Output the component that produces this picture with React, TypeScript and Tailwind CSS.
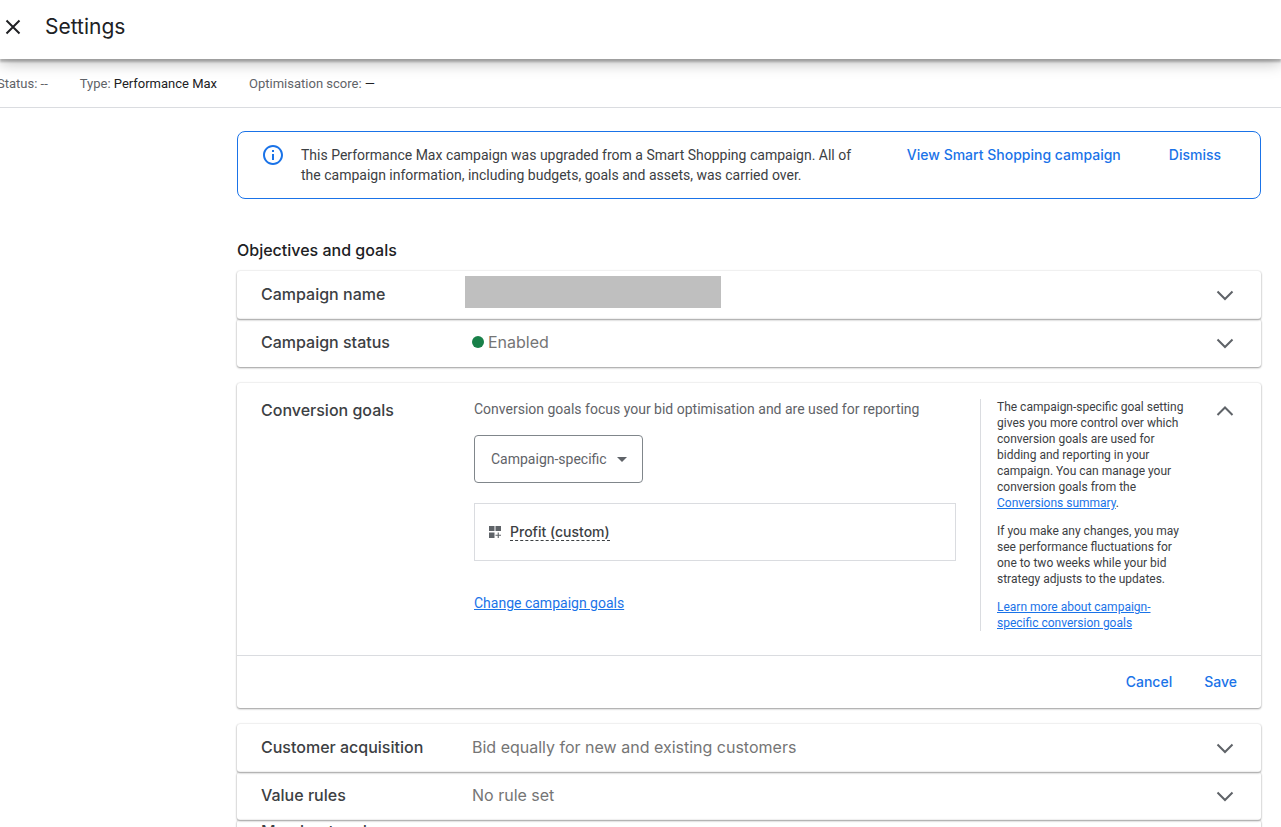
import type { ReactNode } from 'react';

const FONT_DISPLAY = "font-['Inter',sans-serif]";

function Chevron({ up = false }: { up?: boolean }) {
  return (
    <svg viewBox="0 0 24 24" className="h-6 w-6" fill="none" stroke="#5f6368" strokeWidth="2">
      <path d={up ? 'M4.500 16 12 8.500l7.500 7.500' : 'M4.500 8.500 12 16l7.500-7.500'} />
    </svg>
  );
}

function InfoIcon() {
  return (
    <svg viewBox="0 0 24 24" className="h-6 w-6 shrink-0" fill="#1a73e8">
      <path d="M11 7h2v2h-2zm0 4h2v6h-2zm1-9C6.480 2 2 6.480 2 12s4.480 10 10 10 10-4.480 10-10S17.520 2 12 2zm0 18c-4.410 0-8-3.590-8-8s3.590-8 8-8 8 3.590 8 8-3.590 8-8 8z" />
    </svg>
  );
}

function CustomGoalIcon() {
  return (
    <svg viewBox="0 0 14 14" className="h-3.5 w-3.5 shrink-0" fill="#5f6368">
      <path d="M1 1h5.500v5H1zM7.500 1H13v5H7.500zM1 7.500h5.500V13H1zM9.700 7.500h1.100v2.200H13v1.100h-2.200V13H9.700v-2.200H7.500V9.700h2.200z" />
    </svg>
  );
}

function SettingRow({ title, children }: { title: string; children?: ReactNode }) {
  return (
    <section className="flex h-12 items-center rounded-[3px] px-6 shadow-[0_1px_2px_rgba(0,0,0,0.36),0_0_2px_rgba(0,0,0,0.16)]">
      <h3 className={`${FONT_DISPLAY} w-[204px] shrink-0 pr-10 pb-0.5 text-base leading-6 font-medium text-[#3c4043]`}>
        {title}
      </h3>
      <div className={`${FONT_DISPLAY} flex flex-1 items-center pb-0.5 text-base text-[#757575]`}>{children}</div>
      <button type="button" aria-label={`Expand ${title}`}>
        <Chevron />
      </button>
    </section>
  );
}

export default function App() {
  return (
    <div className="flex h-screen flex-col overflow-hidden bg-white font-['Roboto',sans-serif] text-[#3c4043]">
      <header className="relative flex h-[59px] shrink-0 items-center bg-white pb-1.5 shadow-[0_3px_2px_rgba(0,0,0,0.24),0_4px_14px_rgba(0,0,0,0.26)]">
        <button type="button" aria-label="Close" className="ml-px">
          <svg viewBox="0 0 24 24" className="h-6 w-6" fill="none" stroke="#202124" strokeWidth="2">
            <path d="M5.500 5.500l13 13m0-13l-13 13" />
          </svg>
        </button>
        <h1 className={`${FONT_DISPLAY} ml-5 text-[21px] leading-7 text-[#202124]`}>Settings</h1>
      </header>

      <div className="flex h-[49px] shrink-0 items-center gap-8 border-b border-[#dadce0] pt-0.5 text-[13px] text-[#5f6368]">
        <div className="-ml-[3px]">Status: --</div>
        <div>
          Type: <span className="text-[#202124]">Performance Max</span>
        </div>
        <div>
          Optimisation score: <span className="text-[#202124]">—</span>
        </div>
      </div>

      <main className="pl-[237px] pr-5 pt-[23px]">
        <div className="flex h-[68px] items-start rounded-lg border border-[#1a73e8] pl-[23px] pr-[39px] pt-[11px]">
          <InfoIcon />
          <p className="ml-4 w-[580px] shrink-0 pt-0.5 text-sm leading-5">
            This Performance Max campaign was upgraded from a Smart Shopping campaign. All of
            <br />
            the campaign information, including budgets, goals and assets, was carried over.
          </p>
          <div className={`${FONT_DISPLAY} flex flex-1 justify-end gap-12 text-sm leading-6 font-medium text-[#1a73e8]`}>
            <button type="button">View Smart Shopping campaign</button>
            <button type="button">Dismiss</button>
          </div>
        </div>

        <h2 className={`${FONT_DISPLAY} mt-10 mb-2 pb-0.5 text-base leading-[22px] font-medium text-[#202124]`}>
          Objectives and goals
        </h2>

        <SettingRow title="Campaign name">
          <div className="mb-1 h-8 w-64 bg-[#bfbfbf]" />
        </SettingRow>
        <SettingRow title="Campaign status">
          <span className="mr-1 ml-[7px] h-3 w-3 rounded-full bg-[#188049]" />
          Enabled
        </SettingRow>

        <section className="my-4 rounded-[3px] shadow-[0_1px_2px_rgba(0,0,0,0.36),0_0_2px_rgba(0,0,0,0.16)]">
          <div className="flex items-start px-6 pt-4 pb-6">
            <h3 className={`${FONT_DISPLAY} w-[213px] shrink-0 text-base leading-[22px] font-medium text-[#3c4043]`}>
              Conversion goals
            </h3>
            <div className="flex-1 pr-6 text-sm text-[#5f6368]">
              <p className="leading-5">Conversion goals focus your bid optimisation and are used for reporting</p>
              <div className="relative mt-4 w-[169px]">
                <select
                  aria-label="Conversion goal setting"
                  className="h-12 w-full appearance-none rounded border border-[#80868b] bg-white px-4 text-[#5f6368]"
                >
                  <option>Campaign-specific</option>
                </select>
                <svg viewBox="0 0 10 5" className="pointer-events-none absolute top-[22px] right-4 h-[5px] w-2.5" fill="#5f6368">
                  <path d="M0 0h10L5 5z" />
                </svg>
              </div>
              <div className="mt-5 flex h-[58px] items-center gap-2 border border-[#dadce0] px-[13px]">
                <CustomGoalIcon />
                <span className={`${FONT_DISPLAY} border-b border-dashed border-[#3c4043] leading-[17px] font-medium text-[#3c4043]`}>
                  Profit (custom)
                </span>
              </div>
              <a href="#goals" className="mt-8 inline-block leading-5 text-[#1a73e8] underline">
                Change campaign goals
              </a>
            </div>
            <aside className="w-[233px] shrink-0 space-y-3 border-l border-[#dadce0] pl-4 text-xs leading-4">
              <p>
                The campaign-specific goal setting
                <br />
                gives you more control over which
                <br />
                conversion goals are used for
                <br />
                bidding and reporting in your
                <br />
                campaign. You can manage your
                <br />
                conversion goals from the
                <br />
                <a href="#summary" className="text-[#1a73e8] underline">Conversions summary</a>.
              </p>
              <p>
                If you make any changes, you may
                <br />
                see performance fluctuations for
                <br />
                one to two weeks while your bid
                <br />
                strategy adjusts to the updates.
              </p>
              <p>
                <a href="#learn" className="text-[#1a73e8] underline">
                  Learn more about campaign-
                  <br />
                  specific conversion goals
                </a>
              </p>
            </aside>
            <button type="button" aria-label="Collapse Conversion goals">
              <Chevron up />
            </button>
          </div>
          <div className={`${FONT_DISPLAY} flex h-[53px] items-center justify-end gap-8 border-t border-[#dadce0] px-6 text-sm font-medium text-[#1a73e8]`}>
            <button type="button">Cancel</button>
            <button type="button">Save</button>
          </div>
        </section>

        <SettingRow title="Customer acquisition">
          <span className="ml-[7px]">Bid equally for new and existing customers</span>
        </SettingRow>
        <SettingRow title="Value rules">
          <span className="ml-[7px]">No rule set</span>
        </SettingRow>
        <SettingRow title="Merchant and product feed" />
      </main>
    </div>
  );
}
